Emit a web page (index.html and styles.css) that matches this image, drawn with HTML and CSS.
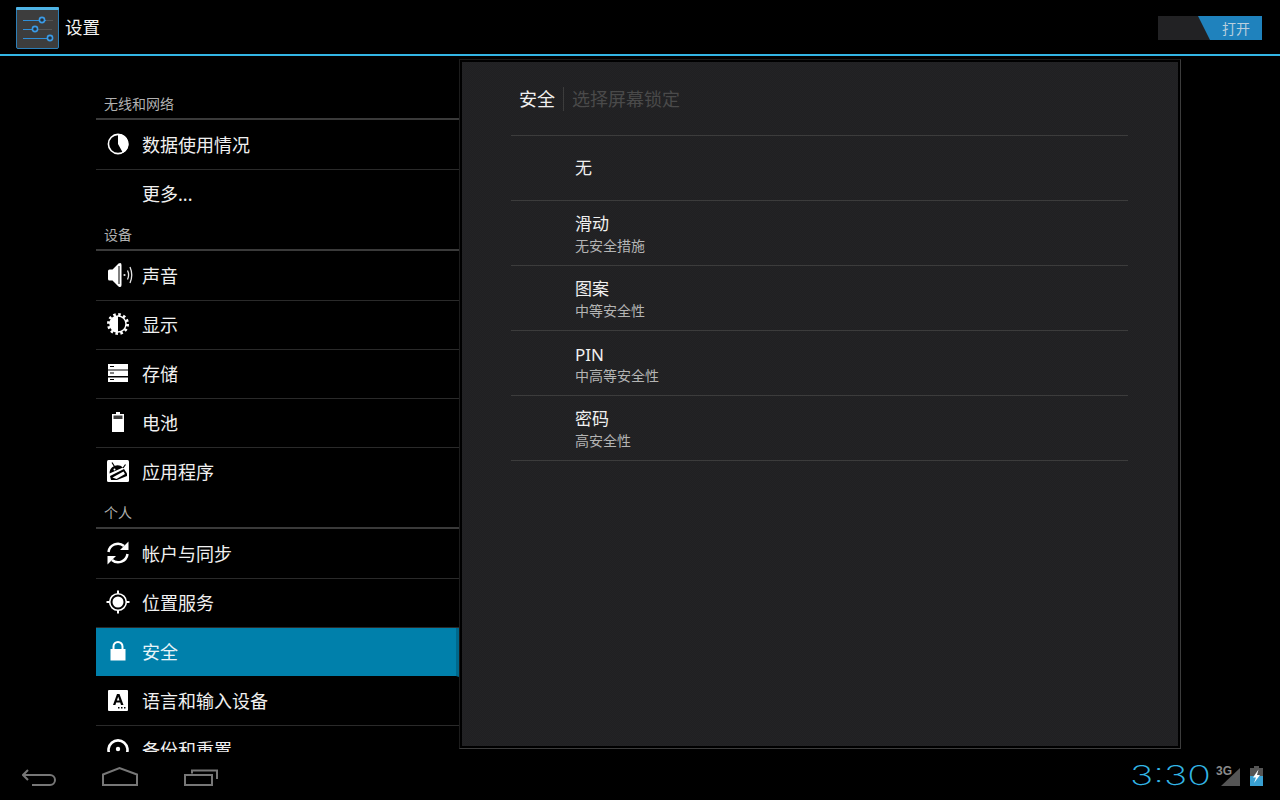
FILE: index.html
```html
<!DOCTYPE html>
<html lang="zh-CN">
<head>
<meta charset="utf-8">
<title>设置</title>
<link rel="stylesheet" href="styles.css">
</head>
<body>
<div class="app">
  <header class="actionbar">
    <svg class="app-icon" width="43" height="42" viewBox="0 0 43 42">
      <rect x="0.5" y="0.5" width="42" height="41" rx="1.5" fill="#3d3d3d" stroke="#2c7fb8"/>
      <rect x="0" y="0" width="43" height="3" rx="1" fill="#4fb4e6"/>
      <g stroke="#2f8fd8" stroke-width="1"><path d="M7 13.5H34M7 22.5H34M7 31.5H34"/></g>
      <g stroke="#555" stroke-width="1"><path d="M30 13.5H37M20 22.5H36"/></g>
      <g fill="#26303a" stroke="#3b9be6" stroke-width="1.6"><circle cx="26" cy="13" r="2.6"/><circle cx="19" cy="22" r="2.6"/><circle cx="34" cy="31" r="2.6"/></g>
    </svg>
    <span class="app-title">设置</span>
    <div class="toggle"><span class="toggle-thumb">打开</span></div>
  </header>

  <main class="main">
    <nav class="sidebar">
      <div class="group-head">无线和网络</div>
      <div class="row first">
        <svg class="icon" width="32" height="32" viewBox="0 0 32 32"><circle cx="16" cy="16" r="9.600" fill="none" stroke="#fff" stroke-width="1.600"/><path d="M16 16V6A10 10 0 0 1 21 25Z" fill="#fff"/></svg>
        <span>数据使用情况</span>
      </div>
      <div class="row last"><span class="icon"></span><span>更多...</span></div>

      <div class="group-head">设备</div>
      <div class="row first">
        <svg class="icon" width="32" height="32" viewBox="0 0 32 32"><path d="M7.500 10.500H10.500L16.500 4.500Q19.500 3 19.500 6V26Q19.500 29 16.500 27.500L10.500 21.500H7.500Q6 21.500 6 20V12Q6 10.500 7.500 10.500Z" fill="#fff"/><path d="M17 7V25" stroke="#000" stroke-width="1"/><circle cx="22.500" cy="16" r="1.100" fill="#e6e6e6"/><path d="M25.500 11.500Q27.700 16 25.500 20.500M28 8Q31.500 16 28 24" fill="none" stroke="#e6e6e6" stroke-width="1.300"/></svg>
        <span>声音</span>
      </div>
      <div class="row">
        <svg class="icon" width="32" height="32" viewBox="0 0 32 32"><circle cx="16" cy="16" r="9.500" fill="none" stroke="#fff" stroke-width="3" stroke-dasharray="2.500 2.470"/><circle cx="16" cy="16" r="8" fill="#000" stroke="#fff" stroke-width="1.400"/><path d="M16 8V24A8 8 0 0 1 16 8Z" fill="#fff"/></svg>
        <span>显示</span>
      </div>
      <div class="row">
        <svg class="icon" width="32" height="32" viewBox="0 0 32 32"><path d="M6 7H26V12.500H6ZM6 13.500H26V19H6ZM6 20.500H26V25H6Z" fill="#fff"/><path d="M8 9.500H12M8 16H12M8 22.500H12" stroke="#000" stroke-width="1"/></svg>
        <span>存储</span>
      </div>
      <div class="row">
        <svg class="icon" width="32" height="32" viewBox="0 0 32 32"><path d="M14 6H18V8H22V26H10V8H14Z" fill="#fff"/><path d="M11.500 9.500H20.500V13H11.500Z" fill="#000" opacity=".75"/></svg>
        <span>电池</span>
      </div>
      <div class="row last">
        <svg class="icon" width="32" height="32" viewBox="0 0 32 32"><rect x="5" y="5" width="22" height="22" rx="1.500" fill="#fff"/><path d="M7.500 18.500A8 8 0 0 1 21 12.500Z" fill="#000"/><path d="M10 7.500L12.500 11.500M21 13L23.500 9.500" stroke="#000" stroke-width="1.200"/><circle cx="12.500" cy="14.500" r="1" fill="#fff"/><path d="M9 25L8 21L22 14L25 18.500V21L15 25Z" fill="#000"/><path d="M10.500 22.500L21.500 16.500L23 19L14.500 24Z" fill="#fff"/></svg>
        <span>应用程序</span>
      </div>

      <div class="group-head">个人</div>
      <div class="row first">
        <svg class="icon" width="32" height="32" viewBox="0 0 32 32"><g fill="none" stroke="#fff" stroke-width="2.500"><path d="M6.500 15A9.500 9.500 0 0 1 22 9"/><path d="M25.500 17A9.500 9.500 0 0 1 10 23"/></g><path d="M26.500 4.500V13H18Z" fill="#fff"/><path d="M5.500 27.500V19H14Z" fill="#fff"/></svg>
        <span>帐户与同步</span>
      </div>
      <div class="row">
        <svg class="icon" width="32" height="32" viewBox="0 0 32 32"><circle cx="16" cy="16" r="8.300" fill="none" stroke="#fff" stroke-width="1.600"/><circle cx="16" cy="16" r="5.500" fill="#fff"/><g stroke="#fff" stroke-width="2"><path d="M16 4.500V8M16 24V27.500M4.500 16H8M24 16H27.500"/></g></svg>
        <span>位置服务</span>
      </div>
      <div class="row selected">
        <svg class="icon" width="32" height="32" viewBox="0 0 32 32"><rect x="8.500" y="14" width="15" height="11.500" fill="#fff"/><path d="M11.500 15V11.500A4.500 4.500 0 0 1 20.500 11.500V15" fill="none" stroke="#fff" stroke-width="2"/></svg>
        <span>安全</span>
      </div>
      <div class="row">
        <svg class="icon" width="32" height="32" viewBox="0 0 32 32"><rect x="6" y="6" width="20" height="21" rx="1" fill="#fff"/><path d="M11 21L15 10H17.500L21.500 21H19L18.200 18.500H14.200L13.400 21ZM14.900 16.500H17.500L16.200 12.700Z" fill="#000"/><g fill="#000"><rect x="16" y="23" width="1.500" height="1.500"/><rect x="19" y="23" width="1.500" height="1.500"/><rect x="22" y="23" width="1.500" height="1.500"/></g></svg>
        <span>语言和输入设备</span>
      </div>
      <div class="row">
        <svg class="icon" width="32" height="32" viewBox="0 0 32 32"><path d="M8 22A9.500 9.500 0 1 1 24 22" fill="none" stroke="#fff" stroke-width="2.600"/><circle cx="16" cy="16" r="2.200" fill="#fff"/><path d="M3.500 19H11L7 26Z" fill="#fff"/></svg>
        <span>备份和重置</span>
      </div>
    </nav>

    <section class="panel">
      <div class="panel-inner">
        <div class="crumbs">
          <span class="crumb-current">安全</span>
          <span class="crumb-next">选择屏幕锁定</span>
        </div>
        <ul class="options">
          <li class="option option-single"><span class="option-title">无</span></li>
          <li class="option"><span class="option-title">滑动</span><span class="option-sub">无安全措施</span></li>
          <li class="option"><span class="option-title">图案</span><span class="option-sub">中等安全性</span></li>
          <li class="option"><span class="option-title option-latin">PIN</span><span class="option-sub">中高等安全性</span></li>
          <li class="option"><span class="option-title">密码</span><span class="option-sub">高安全性</span></li>
        </ul>
      </div>
    </section>
  </main>

  <footer class="navbar">
    <svg width="34" height="24" viewBox="0 0 34 24" class="nav-icon"><path d="M6 6L1 11L6 16M1 11H28A5 5 0 0 1 28 21H10" fill="none" stroke="#777" stroke-width="2"/></svg>
    <svg width="36" height="24" viewBox="0 0 36 24" class="nav-icon"><path d="M1 21V10.500L17.500 4L35 10.500V21Z" fill="none" stroke="#777" stroke-width="2"/></svg>
    <svg width="34" height="24" viewBox="0 0 34 24" class="nav-icon"><rect x="1" y="11" width="27" height="10" fill="none" stroke="#777" stroke-width="2"/><path d="M8 9.500V6.500H33V15" fill="none" stroke="#777" stroke-width="2"/></svg>
    <div class="status">
      <span class="clock">3:30</span>
      <span class="signal">
        <span class="signal-label">3G</span>
        <svg width="21" height="21" viewBox="0 0 21 21"><path d="M1 20L20 2V20Z" fill="#555"/></svg>
      </span>
      <svg class="battery" width="15" height="20" viewBox="0 0 15 20"><path d="M5 0H10V2H14V10H1V2H5Z" fill="#555"/><rect x="1" y="10" width="13" height="10" fill="#39a0d2"/><path d="M9.500 3.500L4 11.500H7L5 17L11 9H8Z" fill="#fff"/></svg>
    </div>
  </footer>
</div>
</body>
</html>
```

FILE: styles.css
```css
* { box-sizing: border-box; }

html, body {
  margin: 0;
  padding: 0;
  background: #000;
}

body {
  font-family: "Noto Sans", "Noto Sans CJK SC", sans-serif;
  color: #f0f0f0;
}

.app {
  width: 1280px;
  height: 800px;
  display: flex;
  flex-direction: column;
  overflow: hidden;
  background: #000;
}

.actionbar {
  flex: none;
  height: 56px;
  padding: 2px 18px 0 16px;
  display: flex;
  align-items: center;
  border-bottom: 2px solid #33b5e5;
}

.app-title {
  margin: -2px 0 0 6px;
  font-size: 17.500px;
  line-height: 24px;
  color: #f2f2f2;
}

.toggle {
  margin-left: auto;
  width: 104px;
  height: 24px;
  display: flex;
  justify-content: flex-end;
  background: #222224;
}

.toggle-thumb {
  width: 64px;
  height: 24px;
  padding-left: 24px;
  font-size: 14px;
  line-height: 26px;
  color: #b9cfdd;
  background: #1f82bd;
  clip-path: polygon(0 0, 100% 0, 100% 100%, 12px 100%);
}

.main {
  flex: 1;
  min-height: 0;
  display: flex;
  overflow: hidden;
}

.sidebar {
  flex: none;
  width: 459px;
  padding: 32px 0 0 96px;
  overflow: hidden;
}

.group-head {
  height: 32px;
  padding: 6px 0 0 8px;
  font-size: 14px;
  line-height: 20px;
  color: #b0b0b0;
  border-bottom: 2px solid #3a3a3a;
}

.row {
  height: 49px;
  padding: 0 0 2px 6px;
  display: flex;
  align-items: center;
  font-size: 18px;
  color: #f0f0f0;
  border-bottom: 1px solid #2a2a2a;
}

.row.first { height: 50px; }
.row.last { border-bottom-color: transparent; }

.row.selected {
  background: #0080ab;
  color: #e8f4f8;
  border-bottom-color: #000;
  border-right: 3px solid #00688c;
}

.icon {
  flex: none;
  width: 32px;
  height: 32px;
  margin-right: 8px;
}

.panel {
  flex: none;
  width: 722px;
  height: 690px;
  margin-top: 3px;
  padding: 2px;
  border: 1px solid;
  border-color: #1c1c1c #3c3c3c #3c3c3c #1c1c1c;
}

.panel-inner {
  height: 100%;
  padding: 25px 50px 0 49px;
  background-color: #212123;
  background-image: repeating-conic-gradient(#202022 0 25%, #232325 0 50%);
  background-size: 2px 2px;
}

.crumbs {
  height: 48px;
  display: flex;
  align-items: flex-start;
  padding-left: 8px;
  font-size: 18px;
  line-height: 24px;
}

.crumb-current {
  padding-right: 8px;
  color: #f0f0f0;
  border-right: 1px solid #3c3c3c;
}

.crumb-next {
  padding-left: 8px;
  color: #4a4a4a;
}

.options {
  margin: 0;
  padding: 0;
  list-style: none;
  border-top: 1px solid #3c3c3c;
}

.option {
  height: 65px;
  padding: 11px 0 0 64px;
  display: flex;
  flex-direction: column;
  border-bottom: 1px solid #3c3c3c;
}

.option-single { padding-top: 20px; }

.option-title {
  font-size: 17px;
  line-height: 23px;
  color: #f0f0f0;
}

.option-latin {
  line-height: 25px;
  margin-bottom: -2px;
}

.option-sub {
  font-size: 14px;
  line-height: 22px;
  color: #b4b4b4;
}

.navbar {
  flex: none;
  height: 48px;
  padding: 0 16px 0 22px;
  display: flex;
  align-items: center;
  gap: 46px;
}

.nav-icon { flex: none; }

.status {
  margin-left: auto;
  display: flex;
  align-items: center;
  gap: 8px;
}

.clock {
  display: inline-block;
  width: 80px;
  font-family: Inter, "Noto Sans", sans-serif;
  font-weight: 200;
  font-size: 27px;
  line-height: 24px;
  color: #33b5e5;
  transform: translateX(-2px) scaleX(1.450);
  transform-origin: left center;
  white-space: nowrap;
}

.signal {
  display: flex;
  position: relative;
}

.signal-label {
  position: absolute;
  left: -4px;
  top: -1px;
  font-family: "Liberation Sans Narrow", "Liberation Sans", sans-serif;
  font-weight: 700;
  font-size: 12px;
  line-height: 12px;
  color: #8a8a8a;
}

.battery { flex: none; }
```
